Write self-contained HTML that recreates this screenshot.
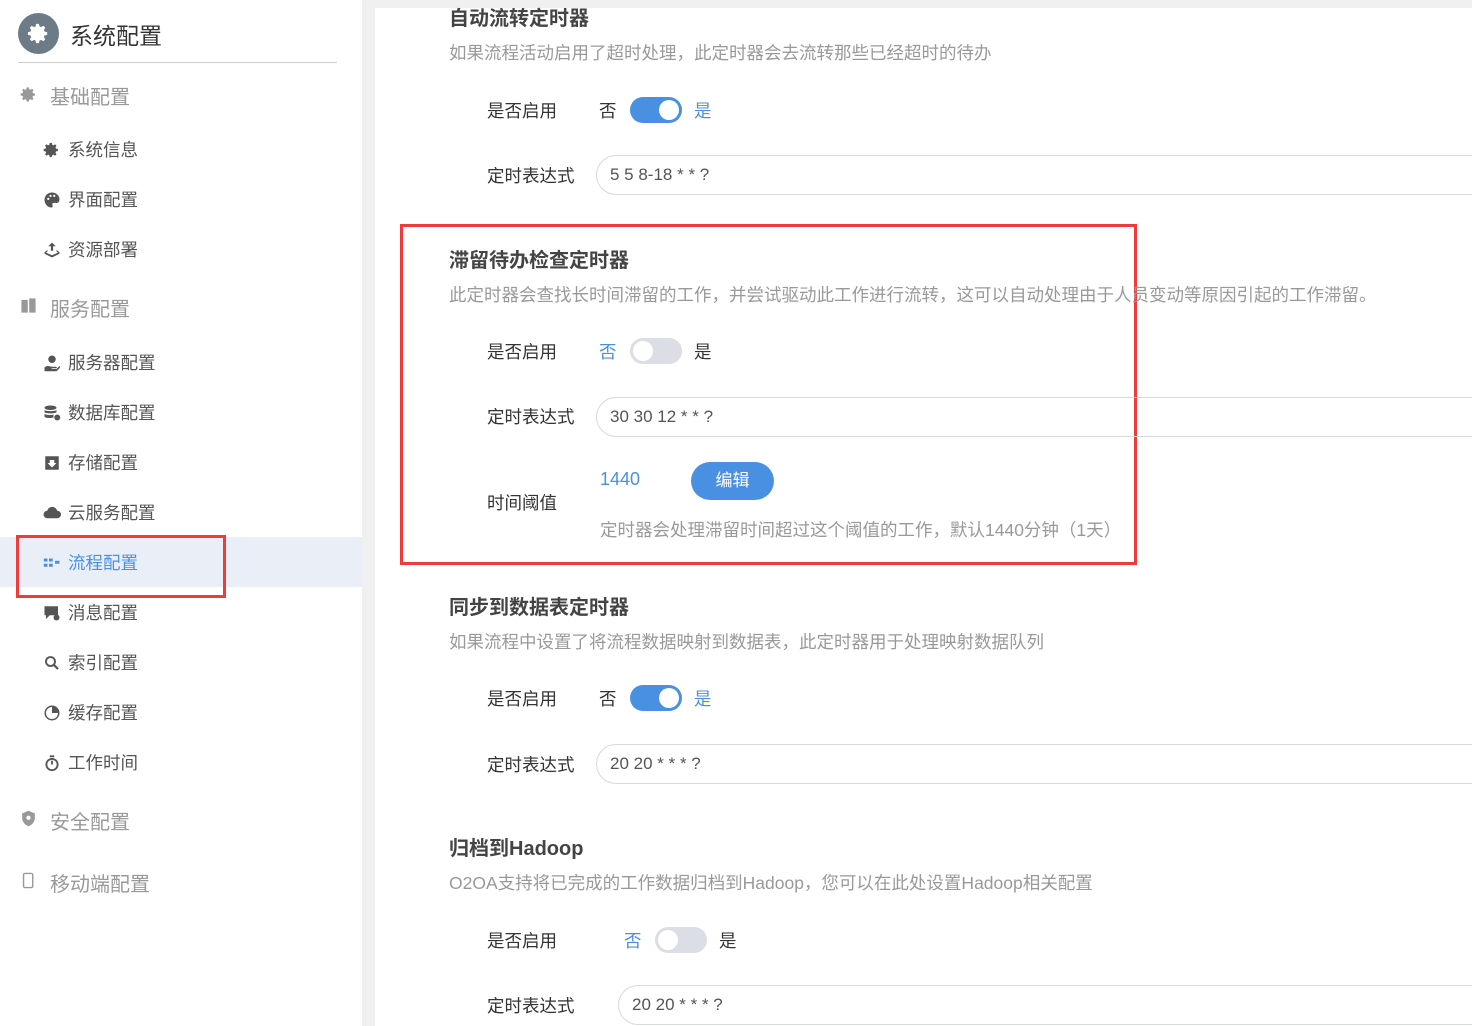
<!DOCTYPE html>
<html><head><meta charset="utf-8"><style>
*{margin:0;padding:0;box-sizing:border-box}
body{width:1472px;height:1026px;overflow:hidden;background:#f0f0f0;font-family:"Liberation Sans","Noto Sans CJK SC",sans-serif;position:relative}
.a{position:absolute;white-space:nowrap}
#side{position:absolute;left:0;top:0;width:362px;height:1026px;background:#fff}
#main{position:absolute;left:375px;top:8px;width:1097px;height:1018px;background:#fff}
.grp{font-size:20px;color:#999;left:50px}
.it{font-size:17.5px;color:#555;left:68px}
.ic{left:43px;width:18px;height:18px}
.gic{left:20px;width:17px;height:17px}
.t{font-size:20px;font-weight:bold;color:#444;left:449px}
.d{font-size:17.5px;color:#999;left:449px}
.l{font-size:17.5px;color:#333;left:487px}
.tg{width:52px;height:26px;border-radius:13px;background:#dcdee5}
.tg i{position:absolute;top:3px;left:3px;width:20px;height:20px;border-radius:50%;background:#fff}
.tg.on{background:#4a90e2}.tg.on i{left:29px}
.inp{height:40px;border:1px solid #d8d8df;border-radius:20px;width:900px;font-size:17px;color:#555;padding-left:13px;line-height:38px}
.blue{color:#4a90e2}
</style></head><body>
<div id="side">
<div class="a" style="left:18px;top:13px;width:41px;height:41px;border-radius:50%;background:#6c7b86"></div>
<svg class="a" style="left:27px;top:22px" width="23" height="23" viewBox="0 0 24 24"><path fill="#fff" d="M12 8a4 4 0 100 8 4 4 0 000-8zm9 5.5v-3l-2.6-.5-.8-1.8 1.5-2.2-2.1-2.1-2.2 1.5-1.8-.8L12.5 2h-3L9 4.6l-1.8.8L5 3.9 2.9 6l1.5 2.2-.8 1.8L1 10.5v3l2.6.5.8 1.8L2.9 18 5 20.1l2.2-1.5 1.8.8.5 2.6h3l.5-2.6 1.8-.8 2.2 1.5 2.1-2.1-1.5-2.2.8-1.8z"/></svg>
<div class="a" style="left:70px;top:17px;font-size:23px;color:#333">系统配置</div>
<div class="a" style="left:18px;top:62px;width:319px;height:1px;background:#ccc"></div>

<svg class="a gic" style="top:86px" viewBox="0 0 24 24"><path fill="#999" d="M12 8a4 4 0 100 8 4 4 0 000-8zm9 5.5v-3l-2.6-.5-.8-1.8 1.5-2.2-2.1-2.1-2.2 1.5-1.8-.8L12.5 2h-3L9 4.6l-1.8.8L5 3.9 2.9 6l1.5 2.2-.8 1.8L1 10.5v3l2.6.5.8 1.8L2.9 18 5 20.1l2.2-1.5 1.8.8.5 2.6h3l.5-2.6 1.8-.8 2.2 1.5 2.1-2.1-1.5-2.2.8-1.8z"/></svg>
<div class="a grp" style="top:81px">基础配置</div>

<svg class="a ic" style="top:141px;width:17px" viewBox="0 0 24 24"><path fill="#555" d="M12 8a4 4 0 100 8 4 4 0 000-8zm9 5.5v-3l-2.6-.5-.8-1.8 1.5-2.2-2.1-2.1-2.2 1.5-1.8-.8L12.5 2h-3L9 4.6l-1.8.8L5 3.9 2.9 6l1.5 2.2-.8 1.8L1 10.5v3l2.6.5.8 1.8L2.9 18 5 20.1l2.2-1.5 1.8.8.5 2.6h3l.5-2.6 1.8-.8 2.2 1.5 2.1-2.1-1.5-2.2.8-1.8z"/></svg>
<div class="a it" style="top:137px">系统信息</div>
<svg class="a ic" style="top:191px" viewBox="0 0 24 24"><path fill="#555" d="M12 2C6 2 2 6.5 2 12s4.5 10 9 10c1.5 0 2-1 2-2 0-1.5-1.5-2 0-3.5 1-1 3-.5 5-.5 2.5 0 4-2 4-5C22 6 17.5 2 12 2zM7 12a1.5 1.5 0 110-3 1.5 1.5 0 010 3zm3-4a1.5 1.5 0 110-3 1.5 1.5 0 010 3zm5 0a1.5 1.5 0 110-3 1.5 1.5 0 010 3z"/></svg>
<div class="a it" style="top:187px">界面配置</div>
<svg class="a ic" style="top:241px" viewBox="0 0 24 24"><path fill="#555" d="M12 2l5 5h-3.5v6h-3V7H7zM2 15l4-3v2l-2 1.5L12 19l8-3.5-2-1.5v-2l4 3v2l-10 5-10-5z"/></svg>
<div class="a it" style="top:237px">资源部署</div>

<svg class="a gic" style="top:297px" viewBox="0 0 24 24"><path fill="#999" d="M2 4h9v18H2zM13 2h9v20h-9z"/></svg>
<div class="a grp" style="top:293px">服务配置</div>

<svg class="a ic" style="top:354px" viewBox="0 0 24 24"><circle cx="12" cy="7" r="5" fill="#555"/><path fill="#555" d="M2 18c4-4 7-1 10-1h5c2 0 2 2 0 2h-5l-1 1h7l4-4c1 1 1 2 0 3l-4 4H2z"/></svg>
<div class="a it" style="top:350px">服务器配置</div>
<svg class="a ic" style="top:404px" viewBox="0 0 24 24"><ellipse cx="10" cy="5" rx="8" ry="3" fill="#555"/><path fill="#555" d="M2 8c2 2 14 2 16 0v3c-2 2-14 2-16 0zM2 13c2 2 10 2 12 1v4c-4 1-10 1-12-1z"/><circle cx="19" cy="18" r="4" fill="#555"/></svg>
<div class="a it" style="top:400px">数据库配置</div>
<svg class="a ic" style="top:454px" viewBox="0 0 24 24"><path fill="#555" d="M3 3h18v18H3z"/><path fill="#fff" d="M9 8h6v4h3l-6 6-6-6h3z"/></svg>
<div class="a it" style="top:450px">存储配置</div>
<svg class="a ic" style="top:504px" viewBox="0 0 24 24"><path fill="#555" d="M6 19a5 5 0 01-.5-10A7 7 0 0119 9a5 5 0 010 10z"/></svg>
<div class="a it" style="top:500px">云服务配置</div>

<div class="a" style="left:0;top:537px;width:362px;height:50px;background:#eaeff7"></div>
<div class="a" style="left:16px;top:535px;width:210px;height:63px;border:3px solid #f03b3b"></div>
<svg class="a ic" style="top:554px" viewBox="0 0 24 24"><path fill="#4a90e2" d="M1 6h5v4H1zM8 6h5v4H8zM1 13h5v4H1zM8 13h5v4H8zM16 9h6v4h-6z"/></svg>
<div class="a it blue" style="top:550px">流程配置</div>

<svg class="a ic" style="top:604px" viewBox="0 0 24 24"><path fill="#555" d="M2 3h18v12H9l-5 5v-5H2z"/><circle cx="18" cy="18" r="4" fill="#555"/></svg>
<div class="a it" style="top:600px">消息配置</div>
<svg class="a ic" style="top:654px" viewBox="0 0 24 24"><circle cx="10" cy="10" r="6" fill="none" stroke="#555" stroke-width="2.5"/><path d="M14 14l6 6" stroke="#555" stroke-width="3"/></svg>
<div class="a it" style="top:650px">索引配置</div>
<svg class="a ic" style="top:704px" viewBox="0 0 24 24"><circle cx="12" cy="12" r="9" fill="none" stroke="#555" stroke-width="2"/><path fill="#555" d="M12 3v9h9a9 9 0 00-9-9z"/></svg>
<div class="a it" style="top:700px">缓存配置</div>
<svg class="a ic" style="top:754px" viewBox="0 0 24 24"><circle cx="12" cy="14" r="7.5" fill="none" stroke="#555" stroke-width="2.5"/><path d="M12 14V9M9 3h6" stroke="#555" stroke-width="2.5"/></svg>
<div class="a it" style="top:750px">工作时间</div>

<svg class="a gic" style="top:810px" viewBox="0 0 24 24"><path fill="#999" d="M12 1l9 4v6c0 6-4 10-9 12-5-2-9-6-9-12V5z"/><circle cx="12" cy="11" r="3" fill="#fff"/></svg>
<div class="a grp" style="top:806px">安全配置</div>
<svg class="a gic" style="top:872px" viewBox="0 0 24 24"><rect x="5" y="2" width="13" height="20" rx="2" fill="none" stroke="#999" stroke-width="2"/></svg>
<div class="a grp" style="top:868px">移动端配置</div>
</div>

<div id="main"></div>
<div class="a t" style="top:2px">自动流转定时器</div>
<div class="a d" style="top:40px">如果流程活动启用了超时处理，此定时器会去流转那些已经超时的待办</div>
<div class="a l" style="top:98px">是否启用</div>
<div class="a l" style="left:599px;top:98px">否</div>
<div class="a tg on" style="left:630px;top:97px"><i></i></div>
<div class="a l blue" style="left:694px;top:98px">是</div>
<div class="a l" style="top:163px">定时表达式</div>
<div class="a inp" style="left:596px;top:155px">5 5 8-18 * * ?</div>

<div class="a" style="left:400px;top:224px;width:737px;height:341px;border:3px solid #f03b3b"></div>
<div class="a t" style="top:244px">滞留待办检查定时器</div>
<div class="a d" style="top:282px">此定时器会查找长时间滞留的工作，并尝试驱动此工作进行流转，这可以自动处理由于人员变动等原因引起的工作滞留。</div>
<div class="a l" style="top:339px">是否启用</div>
<div class="a l blue" style="left:599px;top:339px">否</div>
<div class="a tg" style="left:630px;top:338px"><i></i></div>
<div class="a l" style="left:694px;top:339px">是</div>
<div class="a l" style="top:404px">定时表达式</div>
<div class="a inp" style="left:596px;top:397px">30 30 12 * * ?</div>
<div class="a blue" style="left:600px;top:469px;font-size:18px">1440</div>
<div class="a" style="left:691px;top:462px;width:83px;height:38px;border-radius:19px;background:#4a90e2;color:#fff;font-size:17px;text-align:center;line-height:38px">编辑</div>
<div class="a l" style="top:490px">时间阈值</div>
<div class="a d" style="left:600px;top:517px">定时器会处理滞留时间超过这个阈值的工作，默认1440分钟（1天）</div>

<div class="a t" style="top:591px">同步到数据表定时器</div>
<div class="a d" style="top:629px">如果流程中设置了将流程数据映射到数据表，此定时器用于处理映射数据队列</div>
<div class="a l" style="top:686px">是否启用</div>
<div class="a l" style="left:599px;top:686px">否</div>
<div class="a tg on" style="left:630px;top:685px"><i></i></div>
<div class="a l blue" style="left:694px;top:686px">是</div>
<div class="a l" style="top:752px">定时表达式</div>
<div class="a inp" style="left:596px;top:744px">20 20 * * * ?</div>

<div class="a t" style="top:832px">归档到Hadoop</div>
<div class="a d" style="top:870px">O2OA支持将已完成的工作数据归档到Hadoop，您可以在此处设置Hadoop相关配置</div>
<div class="a l" style="top:928px">是否启用</div>
<div class="a l blue" style="left:624px;top:928px">否</div>
<div class="a tg" style="left:655px;top:927px"><i></i></div>
<div class="a l" style="left:719px;top:928px">是</div>
<div class="a l" style="top:993px">定时表达式</div>
<div class="a inp" style="left:618px;top:985px">20 20 * * * ?</div>
</body></html>
